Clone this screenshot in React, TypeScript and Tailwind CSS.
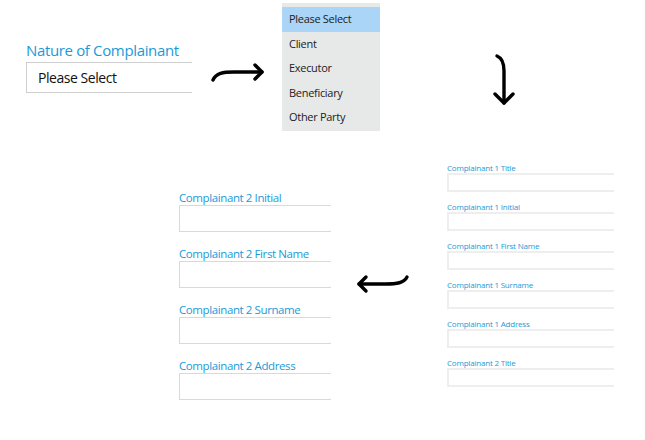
const font = { fontFamily: '"Open Sans", "Noto Sans", sans-serif' };

const CurveRight = () => (
  <svg width="56" height="20" viewBox="0 0 56 20" fill="none" stroke="#000" strokeWidth="3.4" strokeLinecap="round" strokeLinejoin="round">
    <path d="M3 17 C6 10 13 9 24 9 L52 9" />
    <path d="M45 2 L52 9 L45 16" />
  </svg>
);

const CurveLeft = () => (
  <svg width="56" height="20" viewBox="0 0 56 20" fill="none" stroke="#000" strokeWidth="3.4" strokeLinecap="round" strokeLinejoin="round">
    <path d="M52 3 C49 9 42 10 30 10 L4 10" />
    <path d="M11 3 L4 10 L11 17" />
  </svg>
);

const CurveDown = () => (
  <svg width="28" height="56" viewBox="0 0 28 56" fill="none" stroke="#000" strokeWidth="3.4" strokeLinecap="round" strokeLinejoin="round">
    <path d="M7 3 C12 5 14 10 14 18 L14 50" />
    <path d="M5 41 L14 50 L23 41" />
  </svg>
);

const options = ["Please Select", "Client", "Executor", "Beneficiary", "Other Party"];

const smallFields = [
  "Complainant 1 Title",
  "Complainant 1 Initial",
  "Complainant 1 First Name",
  "Complainant 1 Surname",
  "Complainant 1 Address",
  "Complainant 2 Title",
];

const bigFields = [
  "Complainant 2 Initial",
  "Complainant 2 First Name",
  "Complainant 2 Surname",
  "Complainant 2 Address",
];

export default function App() {
  return (
    <div className="w-[645px] h-[440px] bg-white overflow-hidden" style={font}>
      {/* top row: select -> open list -> down */}
      <div className="flex items-start pl-[26px]">
        <div className="w-[166px] mt-[41px]">
          <div className="text-[15px] leading-[18px] mb-[3px] tracking-[-0.35px] text-[#1b9ad6]">Nature of Complainant</div>
          <div className="h-[31px] border border-r-0 border-[#cfcfcf] flex items-center pl-[11px] text-[14px] tracking-[-0.45px] text-[#111]">
            Please Select
          </div>
        </div>

        <div className="ml-[18px] mt-[63px]"><CurveRight /></div>

        <div className="ml-[16px] mt-[3px] w-[98px] h-[128px] bg-[#e7e9e9] pt-[4px] text-[11px] tracking-[-0.3px] text-[#222]">
          {options.map((o, i) => (
            <div key={o} className={`h-[24.6px] flex items-center pl-[7px] ${i === 0 ? "bg-[#aad5f7]" : ""}`}>
              {o}
            </div>
          ))}
        </div>

        <div className="ml-[110px] mt-[53px]"><CurveDown /></div>
      </div>

      {/* bottom row: second complainant <- first complainant */}
      <div className="flex items-start pl-[179px] mt-[32px]">
        <div className="w-[152px] mt-[27px] flex flex-col gap-[14px]">
          {bigFields.map((f) => (
            <div key={f}>
              <div className="text-[11.5px] leading-[15px] tracking-[-0.4px] text-[#1b9ad6]">{f}</div>
              <div className="h-[27px] border border-r-0 border-[#d9d9d9]" />
            </div>
          ))}
        </div>

        <div className="ml-[24px] mt-[111px]"><CurveLeft /></div>

        <div className="ml-[36px] w-[167px] flex flex-col gap-[10px]">
          {smallFields.map((f) => (
            <div key={f}>
              <div className="text-[8px] leading-[10px] tracking-[-0.2px] text-[#1b9ad6]">{f}</div>
              <div className="h-[19px] border-2 border-r-0 border-[#eeeeee]" />
            </div>
          ))}
        </div>
      </div>
    </div>
  );
}
